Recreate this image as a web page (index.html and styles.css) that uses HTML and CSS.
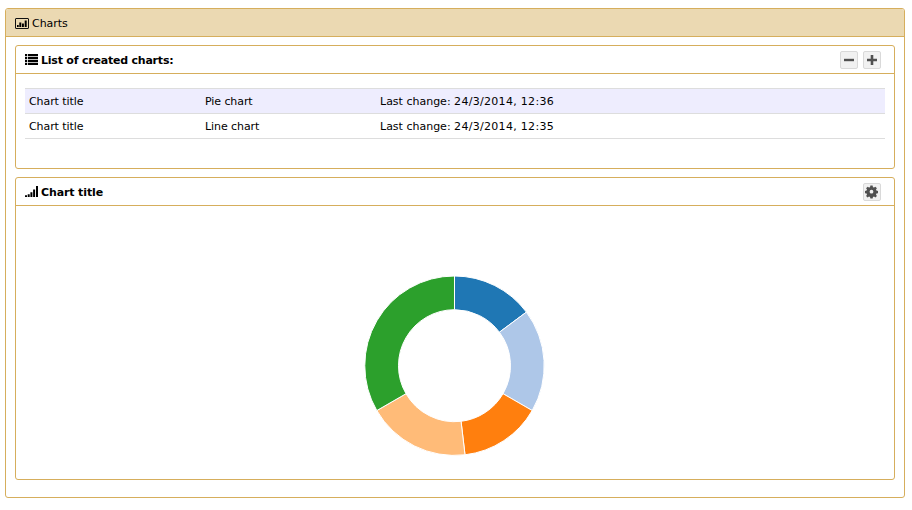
FILE: index.html
```html
<!DOCTYPE html>
<html lang="en">
<head>
<meta charset="utf-8">
<title>Charts</title>
<link rel="stylesheet" href="styles.css">
</head>
<body>
<main class="panel outer">
  <header class="panel-head outer-head">
    <svg class="icon" width="14" height="11" viewBox="0 0 14 11"><rect x=".5" y=".5" width="13" height="10" rx=".5" fill="none" stroke="#111"/><path d="M2 7h1.700v2H2zM4.300 4.500h2V9h-2zM7 5.500h1.900V9H7zM9.700 2.500h2V9h-2z"/></svg>
    <span>Charts</span>
  </header>
  <div class="outer-body">
    <section class="panel list">
      <header class="panel-head">
        <svg class="icon" width="13" height="11" viewBox="0 0 13 11"><path d="M0 0h2v2.200H0zM2.800 0H13v2.200H2.800zM0 2.900h2v2.200H0zM2.800 2.900H13v2.200H2.800zM0 5.800h2V8H0zM2.800 5.800H13V8H2.800zM0 8.700h2v2.200H0zM2.800 8.700H13v2.200H2.800z"/></svg>
        <h2 class="list-title">List of created charts:</h2>
        <div class="tools">
          <button aria-label="Remove"><svg width="16" height="16" viewBox="0 0 16 16"><path d="M3 6.800h10v2.400H3z"/></svg></button>
          <button aria-label="Add"><svg width="16" height="16" viewBox="0 0 16 16"><path d="M6.700 3h2.600v3.700H13v2.600H9.300V13H6.700V9.300H3V6.700h3.700z"/></svg></button>
        </div>
      </header>
      <div class="rows">
        <div class="row selected"><span>Chart title</span><span>Pie chart</span><span>Last change: <time>24/3/2014, 12:36</time></span></div>
        <div class="row"><span>Chart title</span><span>Line chart</span><span>Last change: <time>24/3/2014, 12:35</time></span></div>
      </div>
    </section>
    <section class="panel chart">
      <header class="panel-head">
        <svg class="icon" width="13" height="11" viewBox="0 0 13 11"><path d="M0 9.300h2V11H0zM2.700 8.300h2V11h-2zM5.400 6.300h2V11h-2zM8.100 3.500h2V11h-2zM11 0h2v11h-2z"/></svg>
        <h2>Chart title</h2>
        <div class="tools">
          <button aria-label="Settings"><svg width="16" height="16" viewBox="-7.500 -7.100 16 16"><path fill-rule="evenodd" d="M-1.100-5.500h2.200l.4 1.600 1 .4 1.400-.9 1.500 1.500-.9 1.400.4 1 1.600.4v2.200l-1.600.4-.4 1 .9 1.400-1.500 1.500-1.400-.9-1 .4-.4 1.600h-2.200l-.4-1.600-1-.4-1.400.9-1.500-1.500.9-1.400-.4-1-1.600-.4v-2.200l1.600-.4.4-1-.9-1.400 1.500-1.500 1.400.9 1-.4zM0-1.300a1.900 1.900 0 1 0 0 3.800a1.900 1.900 0 1 0 0-3.800z"/></svg></button>
        </div>
      </header>
      <div class="plot">
        <svg width="181" height="181" viewBox="-90.500 -90.700 181 181" stroke="#fff" stroke-width="1">
          <path fill="#1f77b4" d="M0-89.700A89.700 89.700 0 0 1 71.900-53.600L44.900-33.500A56 56 0 0 0 0-56z"/>
          <path fill="#aec7e8" d="M71.900-53.600A89.700 89.700 0 0 1 77.700 44.850L48.500 28A56 56 0 0 0 44.900-33.500z"/>
          <path fill="#ff7f0e" d="M77.700 44.850A89.700 89.700 0 0 1 10.500 89.100L6.550 55.600A56 56 0 0 0 48.500 28z"/>
          <path fill="#ffbb78" d="M10.500 89.100A89.700 89.700 0 0 1-77.700 44.850L-48.500 28A56 56 0 0 0 6.550 55.600z"/>
          <path fill="#2ca02c" d="M-77.700 44.850A89.700 89.700 0 0 1 0-89.700V-56A56 56 0 0 0-48.500 28z"/>
        </svg>
      </div>
    </section>
  </div>
</main>
</body>
</html>
```
FILE: styles.css
```css
* { box-sizing: border-box; }
body {
  margin: 0;
  padding: 8px 7px 12px 5px;
  background: #fff;
  color: #000;
  font: 11px/14px "DejaVu Sans", sans-serif;
}
.panel { border: 1px solid #d6ae5c; border-radius: 3px; background: #fff; }
.outer { height: 490px; }
.panel-head {
  display: flex;
  align-items: center;
  height: 28px;
  padding: 0 13px 0 9px;
  border-bottom: 1px solid #d6ae5c;
}
.outer-head { background: #ebd9b2; border-radius: 2px 2px 0 0; }
.outer-head span { padding-top: 2px; letter-spacing: -0.05px; }
.outer-head .icon { margin-top: 1px; }
.icon { margin-right: 3px; flex: none; }
h2 { margin: 0; padding-top: 2px; font-size: 11px; line-height: 14px; font-weight: bold; letter-spacing: -0.12px; }
.list-title { letter-spacing: -0.21px; }
.outer-body {
  display: flex;
  flex-direction: column;
  gap: 8px;
  padding: 8px 9px;
}
.list { height: 124px; }
.chart { height: 303px; }
.tools { display: flex; gap: 5px; margin-left: auto; }
button {
  width: 18px;
  height: 18px;
  padding: 0;
  border: 1px solid #d9d9d9;
  border-radius: 2px;
  background: #f1f1f1;
  fill: #505050;
}
button svg { display: block; }
.rows { margin: 14px 9px 0; border-top: 1px solid #ddd; }
.row {
  display: grid;
  grid-template-columns: 176px 175px 1fr;
  align-items: center;
  height: 25px;
  padding: 2px 4px 0;
  border-bottom: 1px solid #ddd;
  letter-spacing: -0.08px;
}
.row span:last-child { letter-spacing: 0; }
.row time { letter-spacing: 0.3px; }
.selected { background: #eeedfe; }
.plot { display: flex; justify-content: center; padding: 69px 1px 0 0; }
.plot svg { display: block; }
```
